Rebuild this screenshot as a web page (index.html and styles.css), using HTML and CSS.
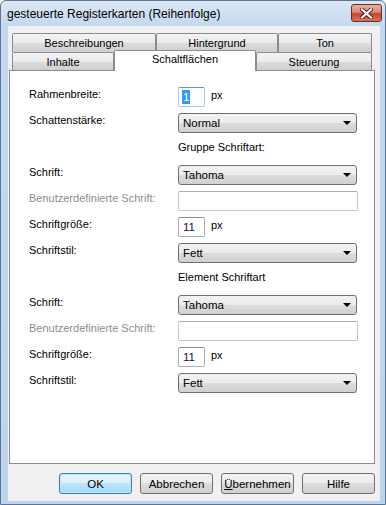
FILE: index.html
```html
<!DOCTYPE html>
<html lang="de">
<head>
    <meta charset="UTF-8">
    <title>gesteuerte Registerkarten (Reihenfolge)</title>
    <link rel="stylesheet" href="styles.css">
</head>
<body>
    <div class="window">
        <div class="titlebar">
            <span class="title">gesteuerte Registerkarten (Reihenfolge)</span>
            <div class="close-btn">
                <svg width="13" height="11" viewBox="0 0 13 11">
                    <path d="M2 1.5 L11 9.5 M11 1.5 L2 9.5" stroke="#5a1d1d" stroke-width="4" stroke-linecap="square"/>
                    <path d="M2 1.5 L11 9.5 M11 1.5 L2 9.5" stroke="#ffffff" stroke-width="2.2" stroke-linecap="square"/>
                </svg>
            </div>
        </div>
        <div class="client">
            <div class="tabs">
                <div class="tab-row">
                    <div class="tab tab-beschreibungen">Beschreibungen</div>
                    <div class="tab tab-hintergrund">Hintergrund</div>
                    <div class="tab tab-ton">Ton</div>
                </div>
                <div class="tab-row">
                    <div class="tab tab-inhalte">Inhalte</div>
                    <div class="tab tab-active">Schaltflächen</div>
                    <div class="tab tab-steuerung">Steuerung</div>
                </div>
            </div>
            <div class="panel">
                <div class="form">
                    <label class="label">Rahmenbreite:</label>
                    <div class="field">
                        <div class="input input-small input-focus"><span class="selected">1</span></div>
                        <span class="unit">px</span>
                    </div>

                    <label class="label">Schattenstärke:</label>
                    <div class="field">
                        <div class="combo">Normal<span class="arrow"></span></div>
                    </div>

                    <div class="group-title">Gruppe Schriftart:</div>

                    <label class="label">Schrift:</label>
                    <div class="field">
                        <div class="combo">Tahoma<span class="arrow"></span></div>
                    </div>

                    <label class="label disabled">Benutzerdefinierte Schrift:</label>
                    <div class="field">
                        <div class="input input-wide"></div>
                    </div>

                    <label class="label">Schriftgröße:</label>
                    <div class="field">
                        <div class="input input-small">11</div>
                        <span class="unit">px</span>
                    </div>

                    <label class="label">Schriftstil:</label>
                    <div class="field">
                        <div class="combo">Fett<span class="arrow"></span></div>
                    </div>

                    <div class="group-title">Element Schriftart</div>

                    <label class="label">Schrift:</label>
                    <div class="field">
                        <div class="combo">Tahoma<span class="arrow"></span></div>
                    </div>

                    <label class="label disabled">Benutzerdefinierte Schrift:</label>
                    <div class="field">
                        <div class="input input-wide"></div>
                    </div>

                    <label class="label">Schriftgröße:</label>
                    <div class="field">
                        <div class="input input-small">11</div>
                        <span class="unit">px</span>
                    </div>

                    <label class="label">Schriftstil:</label>
                    <div class="field">
                        <div class="combo">Fett<span class="arrow"></span></div>
                    </div>
                </div>
            </div>
            <div class="buttons">
                <button class="btn btn-default">OK</button>
                <button class="btn">Abbrechen</button>
                <button class="btn"><u>Ü</u>bernehmen</button>
                <button class="btn">Hilfe</button>
            </div>
        </div>
    </div>
</body>
</html>
```

FILE: styles.css
```css
body {
    margin: 0;
    font-family: "Liberation Sans", Arial, sans-serif;
    font-size: 11px;
    color: #000000;
    background: #ffffff;
}
.window {
    width: 386px;
    height: 505px;
    box-sizing: border-box;
    border: 1px solid #5a7797;
    border-radius: 6px 6px 0 0;
    background: linear-gradient(#dce7f5, #c4d8ef 25px, #bfd4ec);
    display: flex;
    flex-direction: column;
    overflow: hidden;
}
.titlebar {
    height: 25px;
    display: flex;
    align-items: flex-start;
    justify-content: space-between;
    flex-shrink: 0;
}
.title {
    font-size: 12px;
    margin: 6px 0 0 6px;
    color: #000000;
}
.close-btn {
    width: 31px;
    height: 18px;
    box-sizing: border-box;
    margin: 3px 3px 0 0;
    border: 1px solid #6b2a28;
    border-radius: 3px;
    background: linear-gradient(#e8b3a3, #d88a76 45%, #c2452f 55%, #d2765c);
    display: flex;
    align-items: center;
    justify-content: center;
}
.client {
    flex: 1;
    margin: 0 5px 3px 7px;
    background: #f0f0f0;
    padding: 7px 5px 0 1px;
    display: flex;
    flex-direction: column;
}
.tabs {
    padding-left: 3px;
}
.tab-row {
    display: flex;
}
.tab {
    box-sizing: border-box;
    height: 19px;
    border: 1px solid #898c95;
    border-bottom: none;
    border-radius: 2px 2px 0 0;
    background: linear-gradient(#f3f3f3, #ebebeb 50%, #dddddd 50%, #cfcfcf);
    text-align: center;
    line-height: 18px;
    color: #000000;
}
.tab-row + .tab-row .tab {
    height: 18px;
    line-height: 19px;
}
.tab-beschreibungen {
    width: 144px;
}
.tab-hintergrund {
    width: 122px;
}
.tab-ton {
    width: 94px;
}
.tab-inhalte {
    width: 102px;
}
.tab-steuerung {
    width: 116px;
}
.tab-row + .tab-row .tab-active {
    width: 142px;
    height: 21px;
    margin-top: -2px;
    margin-bottom: -1px;
    background: #ffffff;
    line-height: 17px;
    position: relative;
    z-index: 1;
}
.panel {
    height: 394px;
    box-sizing: border-box;
    border: 1px solid #898c95;
    background: #ffffff;
    padding: 16px 0 0 19px;
}
.form {
    display: grid;
    grid-template-columns: 149px 1fr;
    grid-auto-rows: 20px;
    row-gap: 6px;
}
.label {
    padding-top: 1px;
}
.label.disabled {
    color: #8d8d8d;
}
.group-title {
    grid-column: 2;
    line-height: 16px;
}
.field {
    display: flex;
    align-items: center;
}
.input {
    box-sizing: border-box;
    height: 20px;
    border: 1px solid #abadb3;
    border-top-color: #8c8f96;
    border-radius: 2px;
    background: #ffffff;
    padding: 3px 0 0 4px;
    color: #1a0f3c;
    font-size: 11.5px;
}
.input-small {
    width: 27px;
}
.input-wide {
    width: 180px;
    border-color: #c4c6cc;
    border-top-color: #abadb3;
}
.input-focus {
    border-color: #a8cbea;
    border-top-color: #5d97c8;
    padding: 2px 0 0 3px;
}
.selected {
    display: inline-block;
    background: #3399ff;
    color: #ffffff;
    padding: 0 1px;
    line-height: 14px;
}
.unit {
    margin-left: 6px;
    margin-top: -4px;
}
.combo {
    box-sizing: border-box;
    width: 179px;
    height: 20px;
    border: 1px solid #707070;
    border-radius: 3px;
    background: linear-gradient(#f2f2f2, #ebebeb 50%, #dddddd 50%, #d0d0d0);
    padding: 3px 0 0 4px;
    font-size: 11.5px;
    position: relative;
}
.arrow {
    position: absolute;
    right: 5px;
    top: 7px;
    width: 0;
    height: 0;
    border-left: 4px solid transparent;
    border-right: 4px solid transparent;
    border-top: 4px solid #000000;
}
.buttons {
    display: flex;
    justify-content: flex-end;
    gap: 8px;
    padding: 9px 0 0 0;
}
.btn {
    width: 73px;
    height: 21px;
    box-sizing: border-box;
    border: 1px solid #707070;
    border-radius: 3px;
    background: linear-gradient(#f2f2f2, #ebebeb 50%, #dddddd 50%, #cfcfcf);
    font-family: "Liberation Sans", Arial, sans-serif;
    font-size: 11.5px;
    color: #000000;
    padding: 0;
}
.btn-default {
    border-color: #3c7fb1;
    background: linear-gradient(#eaf6fd, #d9f0fc 50%, #bee6fd 50%, #a7d9f5);
    box-shadow: inset 0 0 0 1px #bde8fa;
}
```
